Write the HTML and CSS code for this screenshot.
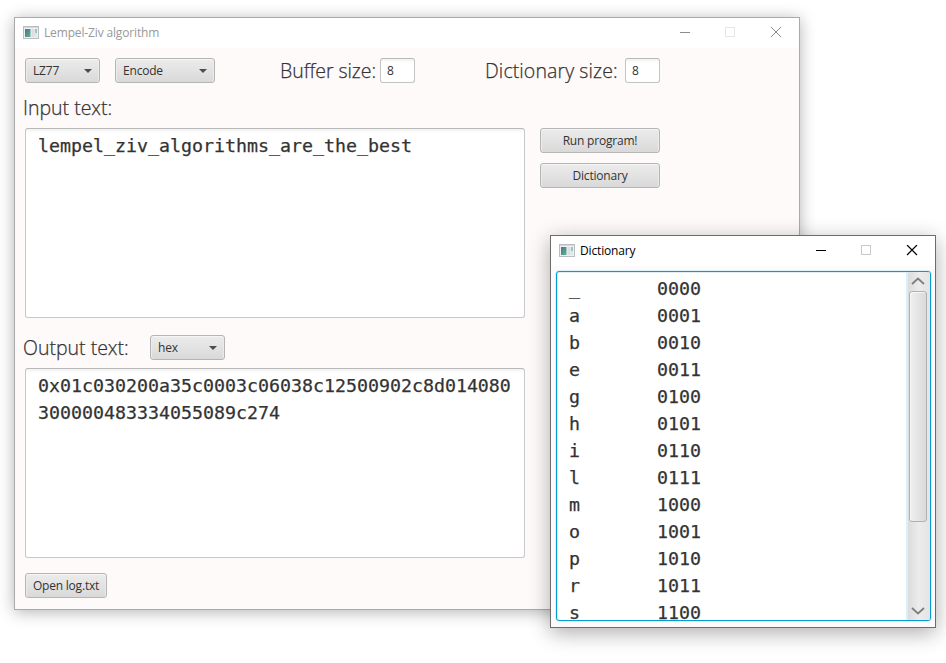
FILE: index.html
```html
<!DOCTYPE html>
<html lang="en">
<head>
<meta charset="utf-8">
<title>Lempel-Ziv algorithm</title>
<link rel="stylesheet" href="styles.css">
</head>
<body>
<svg width="0" height="0" class="defs">
  <defs>
    <linearGradient id="pane" x1="0" y1="0" x2="1" y2="1">
      <stop offset="0" stop-color="#4a6f9c"/><stop offset="1" stop-color="#5fb585"/>
    </linearGradient>
    <symbol id="app" viewBox="0 0 16 13">
      <rect x=".5" y=".5" width="15" height="12" fill="#eef0f2" stroke="#b9bdc1"/>
      <rect x="1" y="1" width="14" height="1" fill="#d5d9dd"/>
      <rect x="2" y="3" width="5.5" height="8" fill="url(#pane)"/>
      <rect x="8.5" y="3" width="3" height="8" fill="#dcdfe2"/>
      <rect x="12" y="3" width="2" height="4" fill="#9dc4bd"/>
      <rect x="12" y="7" width="2" height="4" fill="#e2e5e8"/>
    </symbol>
  </defs>
</svg>

<main class="window main-window">
  <header class="titlebar">
    <svg class="app-icon" width="16" height="13"><use href="#app"/></svg>
    <span class="title">Lempel-Ziv algorithm</span>
    <svg class="controls" width="102" height="11" fill="none" stroke="#8c8c8c">
      <path d="M0 5.5h10"/><rect x="45.5" y=".5" width="9" height="9" stroke="#e6e6e6"/><path d="M91 0l10 10M101 0l-10 10"/>
    </svg>
  </header>
  <div class="content">
    <div class="toolbar">
      <button class="control combo lz">LZ77</button>
      <button class="control combo mode">Encode</button>
      <label class="label buffer">Buffer size:</label>
      <span class="field">8</span>
      <label class="label dict-size">Dictionary size:</label>
      <span class="field">8</span>
    </div>
    <div class="label input-label"><span>Input text:</span></div>
    <div class="input-row">
      <div class="textarea">lempel_ziv_algorithms_are_the_best</div>
      <div class="actions">
        <button class="control run">Run program!</button>
        <button class="control">Dictionary</button>
      </div>
    </div>
    <div class="output-head">
      <span class="label output-label">Output text:</span>
      <button class="control combo hex">hex</button>
    </div>
    <div class="textarea">0x01c030200a35c0003c06038c12500902c8d014080300000483334055089c274</div>
    <button class="control log">Open log.txt</button>
  </div>
</main>

<section class="window dict-window">
  <header class="titlebar">
    <svg class="app-icon" width="16" height="13"><use href="#app"/></svg>
    <span class="title">Dictionary</span>
    <svg class="controls" width="102" height="11" fill="none" stroke="#000">
      <path d="M0 5.5h10"/><rect x="45.5" y=".5" width="9" height="9" stroke="#cacaca"/><path d="M91 0l10 10M101 0l-10 10" stroke-width="1.2"/>
    </svg>
  </header>
  <div class="viewer">
<pre class="codes">_	0000
a	0001
b	0010
e	0011
g	0100
h	0101
i	0110
l	0111
m	1000
o	1001
p	1010
r	1011
s	1100</pre>
    <div class="scrollbar">
      <svg width="14" height="8"><path d="M1 7l6-5.5L13 7" fill="none" stroke="#7f7f7f" stroke-width="1.8"/></svg>
      <div class="thumb"></div>
      <svg width="14" height="8"><path d="M1 1l6 5.5L13 1" fill="none" stroke="#7f7f7f" stroke-width="1.8"/></svg>
    </div>
  </div>
</section>
</body>
</html>
```

FILE: styles.css
```css
* { box-sizing: border-box; }
body {
  margin: 0;
  width: 946px;
  height: 663px;
  overflow: hidden;
  position: relative;
  background: #fff;
  color: #333;
  font: 12px "Open Sans", "Noto Sans", sans-serif;
}
.defs { position: absolute; }
.window { position: absolute; display: flex; flex-direction: column; }
.main-window {
  left: 14px; top: 17px; width: 786px; height: 593px;
  border: 1px solid #aaa;
  background: #fffafa;
  box-shadow: 0 2px 15px rgba(0,0,0,.3);
}
.dict-window {
  left: 550px; top: 235px; width: 386px; height: 393px;
  border: 1px solid #6e6b6d;
  background: #fffafa;
  box-shadow: 0 5px 20px rgba(0,0,0,.32);
}
.titlebar {
  flex: none;
  display: flex;
  align-items: center;
  height: 30px;
  padding: 0 17px 2px 8px;
  background: #fff;
  color: #999;
}
.dict-window .titlebar { color: #000; }
.app-icon { margin-right: 5px; }
.title { letter-spacing: -.15px; }
.controls { margin-left: auto; }
.main-window .controls { margin-top: 1px; }

.content { display: flex; flex-direction: column; padding: 10px; }
.toolbar { display: flex; align-items: center; height: 25px; }
.control {
  height: 25px;
  padding: 0 7px;
  border: 1px solid #b5b5b5;
  border-radius: 3px;
  background: linear-gradient(#ececec, #d9d9d9);
  box-shadow: inset 0 1px #f5f5f5, inset 1px 0 #ebebeb, inset -1px 0 #ebebeb;
  color: #333;
  font: inherit;
  letter-spacing: -.2px;
  text-align: center;
}
.combo { display: flex; align-items: center; justify-content: space-between; }
.combo::after {
  content: "";
  border: 4px solid transparent;
  border-top-color: #4c4c4c;
  border-bottom: 0;
}
.lz { width: 75px; margin-right: 15px; }
.mode { width: 100px; margin-right: 65px; }
.hex { width: 75px; }
.label {
  font-size: 19.5px;
  font-weight: 300;
  white-space: nowrap;
  -webkit-text-stroke: .25px #333;
}
.buffer { width: 100px; letter-spacing: -.05px; }
.dict-size { width: 140px; margin-left: 70px; letter-spacing: .1px; }
.field {
  width: 35px; height: 25px;
  padding-left: 6px;
  border: 1px solid #c4c4c4;
  border-top-color: #b8b8b8;
  border-radius: 3px;
  background: linear-gradient(#f2f2f2, #fff 4px);
  line-height: 23px;
}
.input-label { height: 45px; line-height: 50px; margin-left: -2px; }
.input-row { display: flex; gap: 15px; }
.textarea {
  width: 500px; height: 190px;
  padding: 3px 12px;
  border: 1px solid #c8c8c8;
  border-top-color: #b8b8b8;
  border-radius: 3px;
  background: linear-gradient(#f2f2f2, #fff 4px);
  overflow-wrap: anywhere;
}
.textarea, .codes {
  font-family: "DejaVu Sans Mono", monospace;
  font-size: 18.27px;
  line-height: 27px;
  -webkit-text-stroke: .25px #333;
}
.actions { display: flex; flex-direction: column; gap: 10px; width: 120px; }
.output-head { display: flex; align-items: center; height: 50px; padding-top: 9px; }
.output-label { width: 127px; margin-left: -2px; }
.log { width: 82px; margin-top: 15px; padding: 0; }

.viewer {
  display: flex;
  flex: 1;
  min-height: 0;
  margin: 5px 4px 6px 5px;
  border: 1px solid #039ed3;
  border-radius: 3px;
  background: #fff;
  box-shadow: 0 0 0 1px #d9f1f9, inset 1px 0 #cdeefa, inset 0 1px #e5eff3;
  overflow: hidden;
}
.codes { flex: 1; margin: 0; padding: 3px 12px 0; tab-size: 8; }
.scrollbar {
  display: flex;
  flex-direction: column;
  align-items: center;
  width: 24px;
  padding: 5px 3px 5px 1px;
  border-left: 2px solid #daf0f8;
  background: linear-gradient(90deg, #dcdcdc, #ececec 50%, #e4e4e4);
}
.scrollbar svg { flex: none; }
.thumb {
  width: 18px; height: 231px;
  margin: 6px 0 auto;
  border: 1px solid #b0b0b0;
  border-radius: 3px;
  background: linear-gradient(90deg, #efefef, #dadada);
  box-shadow: inset 1px 1px #f8f8f8;
}
```
